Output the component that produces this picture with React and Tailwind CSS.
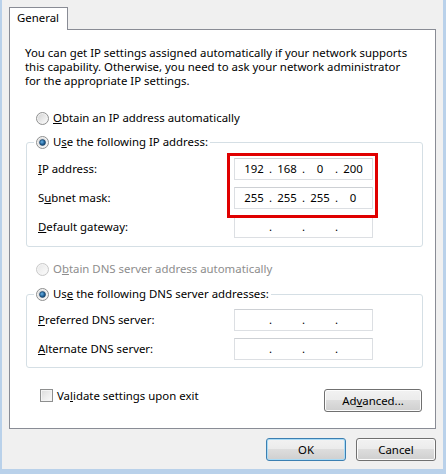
import React from 'react';

const Radio = ({ checked, disabled }) => (
  <svg width="13" height="13" viewBox="0 0 13 13" className="shrink-0">
    <defs>
      <linearGradient id={`rf${checked ? 1 : 0}${disabled ? 1 : 0}`} x1="0" y1="0" x2="1" y2="1">
        <stop offset="0" stopColor={disabled ? '#e8e8e8' : '#d4d4d4'} />
        <stop offset="1" stopColor="#fbfbfb" />
      </linearGradient>
      <radialGradient id="dot" cx="0.4" cy="0.4" r="0.7">
        <stop offset="0" stopColor="#6bb3e6" />
        <stop offset="0.6" stopColor="#1f5f95" />
        <stop offset="1" stopColor="#0e3a63" />
      </radialGradient>
    </defs>
    <circle cx="6.5" cy="6.5" r="6" fill={disabled ? '#f4f4f4' : '#f2f2f2'} stroke={disabled ? '#c8c8c8' : '#8e8f8f'} />
    <circle cx="6.5" cy="6.5" r="4.5" fill={`url(#rf${checked ? 1 : 0}${disabled ? 1 : 0})`} />
    {checked && <circle cx="6.5" cy="6.5" r="3" fill="url(#dot)" stroke="#1b3f62" strokeWidth="0.6" />}
  </svg>
);

const IpField = ({ values = ['', '', '', ''] }) => (
  <div className="w-[139px] h-[22px] border border-[#dcdfe3] border-t-[#cdd0d4] bg-white flex items-center pl-[6px] leading-[14px]">
    {values.map((v, i) => (
      <React.Fragment key={i}>
        <span className="w-[26px] text-center">{v}</span>
        {i < 3 && <span className="w-[7px] text-center">.</span>}
      </React.Fragment>
    ))}
  </div>
);

const Row = ({ label, field }) => (
  <div className="flex items-center h-[22px]">
    <span className="w-[196px]">{label}</span>
    {field}
  </div>
);

const Button = ({ children, primary, className = '' }) => (
  <button
    className={`h-[23px] rounded-[3px] border bg-[linear-gradient(#f2f2f2,#ebebeb_50%,#dddddd_50%,#cfcfcf)] ${
      primary
        ? 'border-[#3c7fb1] shadow-[inset_0_0_0_1px_#a9dbf6]'
        : 'border-[#707070] shadow-[inset_0_0_0_1px_#fcfcfc]'
    } ${className}`}
  >
    {children}
  </button>
);

export default function App() {
  return (
    <div className="w-[446px] h-[474px] bg-[#b9d1ea] pl-[2px] pr-[3px] pb-[5px] font-['Noto_Sans',sans-serif] text-[11.4px] text-black">
      <div className="h-full bg-[#f0f0f0] pt-[7px] px-[7px] flex flex-col">
        {/* Tab */}
        <div className="relative z-10 w-[59px] h-[23px] -mb-[1px] border border-b-0 border-[#898c95] bg-white pl-[7px] pt-[3px] leading-[14px]">
          General
        </div>

        {/* Tab panel */}
        <div className="h-[400px] border border-[#898c95] bg-white flex flex-col">
          <p className="ml-[15px] mt-[16px] leading-[14px]">
            You can get IP settings assigned automatically if your network supports
            <br />
            this capability. Otherwise, you need to ask your network administrator
            <br />
            for the appropriate IP settings.
          </p>

          <div className="ml-[26px] mt-[22px] h-[16px] flex items-center gap-[4px]">
            <Radio />
            <span><u>O</u>btain an IP address automatically</span>
          </div>

          <fieldset className="ml-[16px] mt-[8px] w-[397px] border border-[#d5dfe5] rounded-[3px] px-[7px] pb-[8px]">
            <legend className="px-[2px] h-[16px] flex items-center gap-[4px]">
              <Radio checked />
              <span>U<u>s</u>e the following IP address:</span>
            </legend>
            <div className="relative mt-[8px] pl-[4px] flex flex-col gap-[7px]">
              <Row label={<><u>I</u>P address:</>} field={<IpField values={['192', '168', '0', '200']} />} />
              <Row label={<>S<u>u</u>bnet mask:</>} field={<IpField values={['255', '255', '255', '0']} />} />
              <Row label={<><u>D</u>efault gateway:</>} field={<IpField />} />
              <div className="absolute left-[193px] top-[-5px] w-[151px] h-[65px] border-[3px] border-[#e00000]" />
            </div>
          </fieldset>

          <div className="ml-[26px] mt-[14px] h-[16px] flex items-center gap-[4px] text-[#8d8d8d]">
            <Radio disabled />
            <span>O<u>b</u>tain DNS server address automatically</span>
          </div>

          <fieldset className="ml-[16px] mt-[9px] w-[397px] border border-[#d5dfe5] rounded-[3px] px-[7px] pb-[7px]">
            <legend className="px-[2px] h-[16px] flex items-center gap-[4px]">
              <Radio checked />
              <span>Us<u>e</u> the following DNS server addresses:</span>
            </legend>
            <div className="mt-[7px] pl-[4px] flex flex-col gap-[7px]">
              <Row label={<><u>P</u>referred DNS server:</>} field={<IpField />} />
              <Row label={<><u>A</u>lternate DNS server:</>} field={<IpField />} />
            </div>
          </fieldset>

          <div className="mt-[21px] ml-[30px] mr-[13px] flex items-start justify-between">
            <div className="flex items-center gap-[4px] h-[13px]">
              <span className="w-[13px] h-[13px] border border-[#8e8f8f] bg-[linear-gradient(135deg,#dcdcdc,#fbfbfb)] shadow-[inset_0_0_0_1px_#f4f4f4]" />
              <span>Va<u>l</u>idate settings upon exit</span>
            </div>
            <Button className="w-[98px]">Ad<u>v</u>anced...</Button>
          </div>
        </div>

        {/* Dialog buttons */}
        <div className="mt-[9px] flex justify-end gap-[10px]">
          <Button primary className="w-[80px]">OK</Button>
          <Button className="w-[80px]">Cancel</Button>
        </div>
      </div>
    </div>
  );
}
